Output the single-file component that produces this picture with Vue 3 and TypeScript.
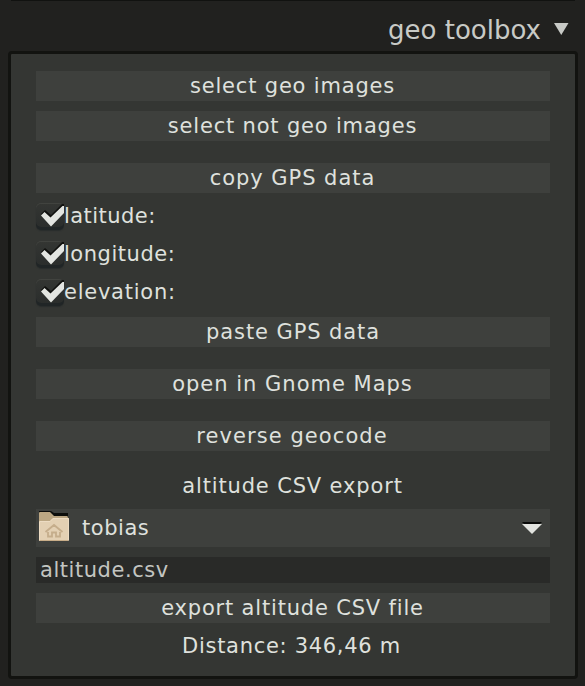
<script setup lang="ts">
import { ref } from 'vue'

interface Field {
  label: string
  kind: string
  checked: boolean
}

const fields = ref<Field[]>([
  { label: 'latitude:', kind: 'latitude', checked: true },
  { label: 'longitude:', kind: 'longitude', checked: true },
  { label: 'elevation:', kind: 'elevation', checked: true },
])
const filename = ref('altitude.csv')
</script>

<template>
  <main class="module">
    <header class="title">
      <span>geo toolbox</span>
      <svg class="fold" width="15" height="13" viewBox="0 0 15 13"><path d="M0 0H14.500L7.250 12Z" fill="#c8cac6" /></svg>
    </header>
    <section class="panel">
      <button class="btn snug">select geo images</button>
      <button class="btn snug">select not geo images</button>
      <button class="btn gap copy">copy GPS data</button>
      <div class="checks">
        <div v-for="f in fields" :key="f.label" class="check" :class="f.kind" @click="f.checked = !f.checked">
          <span class="box">
            <svg v-if="f.checked" width="28" height="29" viewBox="0 0 28 29">
              <path d="M5 11L9 7L15 12L26 1H28V4L15 18Z" fill="#10110f" />
              <path d="M5 12.500L8.500 9L14.500 14.500L26.500 3H28V10L15 23.500Z" fill="#e3e5e1" />
            </svg>
          </span>
          <span>{{ f.label }}</span>
        </div>
      </div>
      <button class="btn paste">paste GPS data</button>
      <button class="btn gap maps">open in Gnome Maps</button>
      <button class="btn gap geocode">reverse geocode</button>
      <div class="label export">altitude CSV export</div>
      <button class="chooser">
        <svg class="folder" width="32" height="32" viewBox="0 0 32 32">
          <path d="M1 2V0H13L16 2H30V9H1Z" fill="#0c0d0b" />
          <path d="M1 30V2Q1 1 2 1H12L16 5H29Q30 5 30 7V30Z" fill="#bca783" />
          <path d="M1 30V11Q1 10 2 10H12L15 7H30Q31 7 31 8V29Q31 30 30 30H2Q1 30 1 29Z" fill="#e3d0b3" />
          <path d="M1.500 29V11Q1.500 10.500 2 10.500H12L15 7.500H30.500V29" fill="none" stroke="#eddcc3" />
          <path d="M2 29.500H30" stroke="#c8ad88" />
          <path d="M7.500 21L16 14L24.500 21M10 21V25.500H14V21.500H18V25.500H22V21" fill="none" stroke="#c5ad8b" stroke-width="1.800" />
        </svg>
        <span>tobias</span>
        <svg class="arrow" width="20" height="12" viewBox="0 0 20 12">
          <path d="M0 0H20L18 2H2Z" fill="#090a09" />
          <path d="M0 2H20L10 12Z" fill="#e1e3df" />
        </svg>
      </button>
      <div class="entry">{{ filename }}</div>
      <button class="btn snug">export altitude CSV file</button>
      <div class="label distance">Distance: 346,46 m</div>
    </section>
  </main>
</template>

<style>
body { background: #21211f; }
</style>

<style scoped>
.module {
  box-sizing: border-box;
  height: 686px;
  padding: 0 7px 7px 8px;
  font: 21px/30px "DejaVu Sans", sans-serif;
  letter-spacing: 1px;
  color: #dfe1dd;
}
.title {
  height: 51px;
  box-sizing: border-box;
  margin-left: 3px;
  margin-right: 3px;
  padding: 9px 6px 0 0;
  border-top: 1px solid #111210;
  display: flex;
  justify-content: flex-end;
  gap: 13px;
  font-size: 26px;
  line-height: 40px;
  letter-spacing: 0;
  color: #c8cac6;
}
.fold { margin-top: 13px; }
.panel {
  box-sizing: border-box;
  height: 628px;
  padding: 17px 25px 0;
  border: 3px solid #121310;
  border-radius: 4px;
  background: #343633;
  display: flex;
  flex-direction: column;
}
.btn, .chooser {
  appearance: none;
  border: 0;
  padding: 0;
  font: inherit;
  letter-spacing: inherit;
  color: inherit;
  background: #3e403d;
}
.btn {
  height: 30px;
  flex: none;
  margin-bottom: 10px;
}
.btn.snug { letter-spacing: 0.82px; padding-right: 1px; }
.btn.copy { letter-spacing: 0.95px; padding-right: 1px; }
.btn.paste { margin-top: 7px; letter-spacing: 0.9px; }
.btn.maps { padding-right: 1px; }
.btn.geocode { padding-right: 2px; letter-spacing: 1.07px; }
.gap { margin-top: 12px; }
.checks { margin-top: -7px; letter-spacing: 0.53px; }
.check {
  display: flex;
  height: 38px;
  line-height: 40px;
}
.latitude { letter-spacing: 0.45px; }
.elevation { letter-spacing: 0.75px; }
.box {
  box-sizing: border-box;
  width: 28px;
  height: 27px;
  margin-top: 7px;
  border-radius: 5px;
  background: linear-gradient(#343633, #292c2b);
  box-shadow: inset 0 1px #41433f, inset 0 -3px #202526, 0 1px 1px #292d2c;
}
.box svg { display: block; }
.label { text-align: center; }
.export { margin: 10px 0 8px; padding-right: 1px; letter-spacing: 0.85px; }
.chooser {
  height: 38px;
  display: flex;
  align-items: center;
  padding: 0 8px 0 2px;
  text-align: left;
  letter-spacing: 0.55px;
}
.folder { margin: 0 12px 2px 0; }
.arrow { margin-left: auto; }
.entry {
  height: 26px;
  margin: 10px 0;
  padding-left: 4px;
  line-height: 26px;
  letter-spacing: 0.55px;
  color: #c3c5c1;
  background: #292a28;
}
.distance { margin-top: -2px; padding-right: 3px; letter-spacing: 0.7px; }
</style>
